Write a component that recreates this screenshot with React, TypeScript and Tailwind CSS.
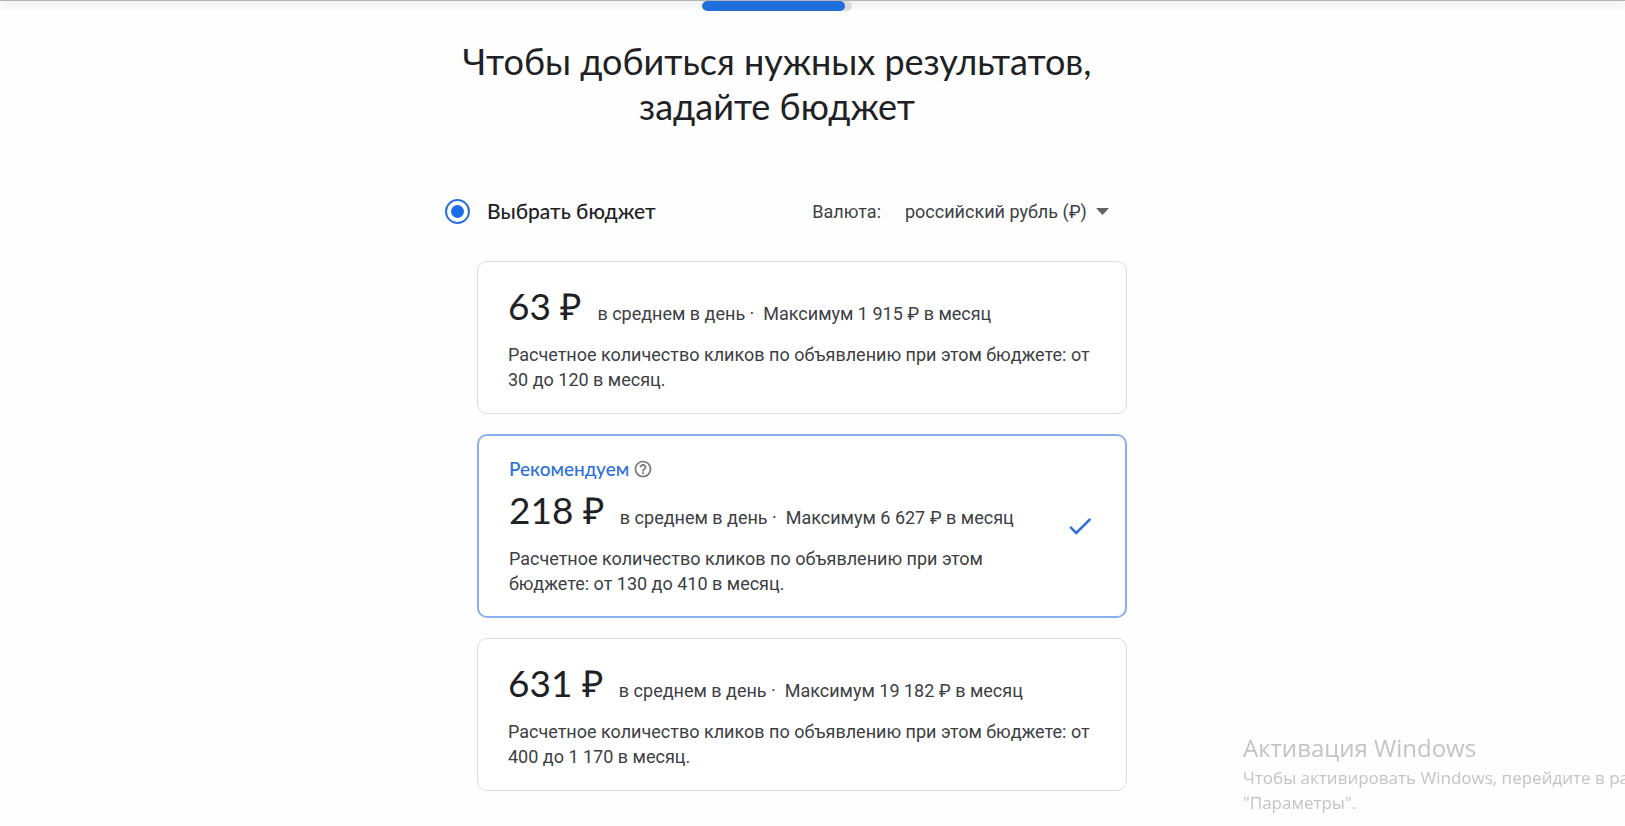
import { useState } from "react";
import clsx from "clsx";

interface BudgetOption {
  id: string;
  price: string;
  monthly: string;
  clicks: string;
  recommended?: boolean;
}

const BUDGETS: BudgetOption[] = [
  { id: "low", price: "63 ₽", monthly: "1 915 ₽", clicks: "от 30 до 120" },
  { id: "mid", price: "218 ₽", monthly: "6 627 ₽", clicks: "от 130 до 410", recommended: true },
  { id: "high", price: "631 ₽", monthly: "19 182 ₽", clicks: "от 400 до 1 170" },
];

function HelpIcon() {
  return (
    <svg className="size-5 text-[#757575]" viewBox="0 0 24 24" fill="currentColor" aria-hidden="true">
      <path d="M11 18h2v-2h-2v2zm1-16C6.48 2 2 6.48 2 12s4.48 10 10 10 10-4.48 10-10S17.52 2 12 2zm0 18c-4.41 0-8-3.59-8-8s3.59-8 8-8 8 3.59 8 8-3.59 8-8 8zm0-14c-2.21 0-4 1.79-4 4h2c0-1.1.9-2 2-2s2 .9 2 2c0 2-3 1.75-3 5h2c0-2.25 3-2.5 3-5 0-2.21-1.79-4-4-4z" />
    </svg>
  );
}

function CheckIcon() {
  return (
    <svg className="size-[30px] shrink-0 text-[#2a6fdb]" viewBox="0 0 24 24" fill="currentColor" aria-hidden="true">
      <path d="M9 16.17L4.83 12l-1.42 1.41L9 19 21 7l-1.41-1.41z" />
    </svg>
  );
}

interface BudgetCardProps {
  option: BudgetOption;
  selected: boolean;
  onSelect: (id: string) => void;
}

function BudgetCard({ option, selected, onSelect }: BudgetCardProps) {
  return (
    <button
      type="button"
      aria-pressed={selected}
      onClick={() => onSelect(option.id)}
      className={clsx(
        "flex w-full items-center rounded-[10px] bg-white px-[30px] pt-5 text-left text-[#3c4043]",
        selected ? "border-2 border-[#8ab0ef] pb-5" : "border border-[#dadce0] pb-[21px]"
      )}
    >
      <span className="flex-1">
        {option.recommended && (
          <span className="mb-[5px] flex items-center gap-1 font-['Lato',sans-serif] text-[19px] leading-[25px] font-medium text-[#2a6fdb]">
            Рекомендуем
            <HelpIcon />
          </span>
        )}
        <span className="flex items-baseline gap-[15px]">
          <span className="font-['Lato',sans-serif] text-[37px] leading-[48px] text-[#202124]">{option.price}</span>
          <span className="text-[18px] leading-[25px]">
            {`в среднем в день ·\u00a0 Максимум ${option.monthly} в месяц`}
          </span>
        </span>
        <span className="mt-3 block text-[18px] leading-[25px]">
          {`Расчетное количество кликов по объявлению при этом бюджете: ${option.clicks} в месяц.`}
        </span>
      </span>
      {selected && <CheckIcon />}
    </button>
  );
}

function WindowsWatermark() {
  return (
    <div className="pointer-events-none fixed right-0 bottom-0 w-[382px] overflow-hidden pb-[11px] font-['Open_Sans',sans-serif] whitespace-nowrap text-[#c4c4c4]">
      <p className="text-[24px] leading-[35px]">Активация Windows</p>
      <p className="text-[17px] leading-[25px]">Чтобы активировать Windows, перейдите в раздел</p>
      <p className="text-[17px] leading-[25px]">"Параметры".</p>
    </div>
  );
}

export default function App() {
  const [selected, setSelected] = useState("mid");

  return (
    <div className="min-h-screen bg-[#fefefe] pr-[71px] font-['Roboto',sans-serif] text-[#3c4043]">
      <div className="-mr-[71px] h-px bg-[#b4b4b4] shadow-[0_2px_8px_rgba(0,0,0,0.45)]" />

      <main className="mx-auto max-w-[700px]">
        <div
          role="progressbar"
          aria-valuenow={95}
          aria-label="Прогресс"
          className="mx-auto h-[10px] w-[150px] overflow-hidden rounded-full bg-[#dadce0]"
        >
          <div className="h-full w-[143px] rounded-full bg-[#1f6fdc]" />
        </div>

        <h1 className="mt-7 text-center font-['Lato',sans-serif] text-[36px] leading-[45px] text-[#202124]">
          Чтобы добиться нужных результатов,
          <br />
          задайте бюджет
        </h1>

        <div className="mt-[70px] flex items-center pr-[18px] pl-[18px]">
          <input
            id="pick-budget"
            type="radio"
            name="budget-mode"
            defaultChecked
            className="size-[25px] appearance-none rounded-full border-2 border-[#2a6fdb] bg-[#1a6fe8] bg-clip-content p-1"
          />
          <label
            htmlFor="pick-budget"
            className="ml-[17px] pb-[2px] font-['Lato',sans-serif] text-[21px] leading-[23px] font-medium text-[#202124]"
          >
            Выбрать бюджет
          </label>
          <label htmlFor="currency" className="ml-auto text-[18px] leading-[25px]">
            Валюта:
          </label>
          <div className="ml-6 flex items-center">
            <select id="currency" className="appearance-none bg-transparent text-[18px] leading-[25px]">
              <option>российский рубль (₽)</option>
            </select>
            <svg className="ml-[9px] h-[7px] w-[13px] text-[#5f6368]" viewBox="0 0 13 7" fill="currentColor" aria-hidden="true">
              <path d="M0 0h13L6.500 7z" />
            </svg>
          </div>
        </div>

        <div className="mt-[37px] flex flex-col gap-5 pb-[35px] pl-[50px]">
          {BUDGETS.map((option) => (
            <BudgetCard
              key={option.id}
              option={option}
              selected={option.id === selected}
              onSelect={setSelected}
            />
          ))}
        </div>
      </main>

      <WindowsWatermark />
    </div>
  );
}
